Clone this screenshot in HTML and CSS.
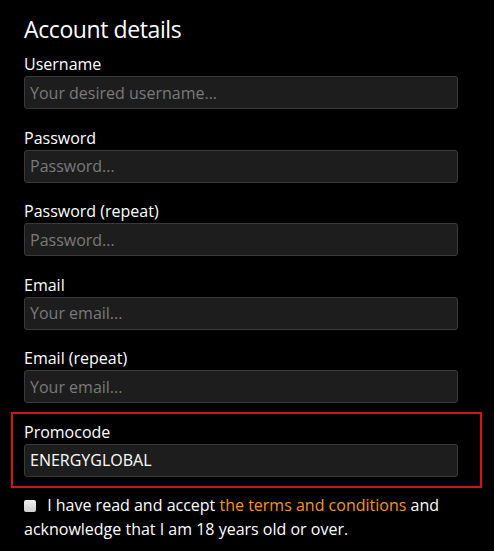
FILE: index.html
```html
<!DOCTYPE html>
<html>
<head>
<meta charset="utf-8">
<link rel="stylesheet" href="styles.css">
</head>
<body>
<form class="form">
  <h1 class="title">Account details</h1>
  <div class="field">
    <label class="label">Username</label>
    <input class="input" type="text" placeholder="Your desired username...">
  </div>
  <div class="field">
    <label class="label">Password</label>
    <input class="input" type="password" placeholder="Password...">
  </div>
  <div class="field">
    <label class="label">Password (repeat)</label>
    <input class="input" type="password" placeholder="Password...">
  </div>
  <div class="field">
    <label class="label">Email</label>
    <input class="input" type="text" placeholder="Your email...">
  </div>
  <div class="field">
    <label class="label">Email (repeat)</label>
    <input class="input" type="text" placeholder="Your email...">
  </div>
  <div class="field field-highlight">
    <label class="label">Promocode</label>
    <input class="input" type="text" value="ENERGYGLOBAL">
  </div>
  <p class="terms"><input class="check" type="checkbox"> I have read and accept <a class="link" href="#">the terms and conditions</a> and acknowledge that I am 18 years old or over.</p>
</form>
</body>
</html>
```
FILE: styles.css
```css
html, body {
  margin: 0;
  padding: 0;
  background: #000;
}
body {
  font-family: "Open Sans", "DejaVu Sans", sans-serif;
  color: #fff;
}
.form {
  padding: 13px 30px 0 24px;
}
.title {
  margin: 0 0 11px;
  font-size: 23px;
  line-height: 32px;
  font-weight: 400;
  letter-spacing: -0.4px;
}
.field {
  display: flex;
  flex-direction: column;
  margin-bottom: 20.5px;
}
.label {
  font-size: 16px;
  line-height: 16px;
  padding-bottom: 4px;
}
.input {
  box-sizing: border-box;
  height: 33px;
  width: 434px;
  margin: 0;
  padding: 0 5px;
  background: #1d1d1d;
  border: 1px solid #3a3a3a;
  border-radius: 3px;
  color: #fff;
  font-family: inherit;
  font-size: 16px;
  outline: none;
}
.input::placeholder {
  color: #7a7a7a;
}
.field-highlight {
  position: relative;
}
.field-highlight::before {
  content: "";
  position: absolute;
  left: -13px;
  right: -18px;
  top: -12px;
  bottom: -11px;
  border: 2px solid #d3141c;
  pointer-events: none;
}
.terms {
  margin: -4px 0 0;
  font-size: 16px;
  line-height: 24px;
}
.check {
  appearance: none;
  -webkit-appearance: none;
  width: 12px;
  height: 12px;
  margin: 0 7px 0 0;
  vertical-align: -1px;
  background: linear-gradient(#f0f0f0, #cfcfcf);
  border-radius: 2px;
}
.link {
  color: #f1962d;
  text-decoration: none;
}
```
